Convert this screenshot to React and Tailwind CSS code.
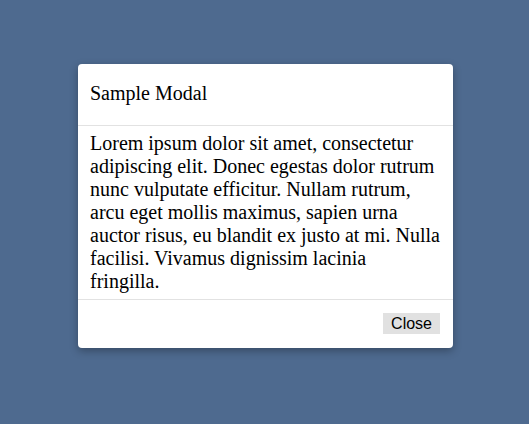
export default function App() {
  return (
    <div className="w-[529px] h-[424px] bg-[#4e6a8f] flex items-start justify-start pl-[78px] pt-[64px]" style={{ fontFamily: '"Liberation Serif", serif' }}>
      <div className="w-[375px] bg-white rounded-[4px] shadow-[0_3px_8px_rgba(0,0,0,0.3)] text-black">
        <div className="px-[12px] pt-[18px] pb-[20px] border-b border-[#e2e2e2] text-[20px] leading-[23px]">
          Sample Modal
        </div>
        <div className="px-[12px] pt-[6px] pb-[6px] border-b border-[#e2e2e2] text-[20px] leading-[23px]">
          Lorem ipsum dolor sit amet, consectetur adipiscing elit. Donec egestas dolor rutrum nunc vulputate efficitur. Nullam rutrum, arcu eget mollis maximus, sapien urna auctor risus, eu blandit ex justo at mi. Nulla facilisi. Vivamus dignissim lacinia
          <br />
          fringilla.
        </div>
        <div className="flex justify-end px-[13px] pt-[13px] pb-[14px]">
          <button className="bg-[#e1e1e1] h-[21px] px-[8px] text-[16px] leading-[21px] text-black" style={{ fontFamily: '"Liberation Sans", Arial, sans-serif' }}>
            Close
          </button>
        </div>
      </div>
    </div>
  );
}
